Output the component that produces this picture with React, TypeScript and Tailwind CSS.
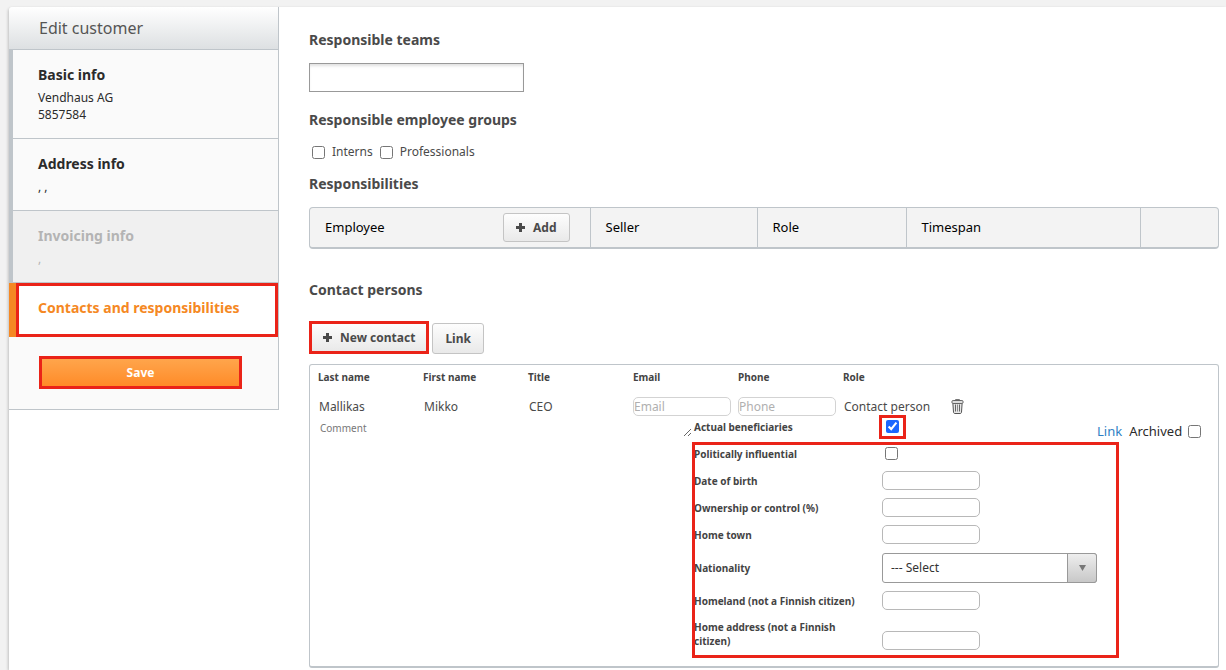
import React, { useState } from 'react';

const PlusIcon: React.FC = () => (
    <svg className="h-[9px] w-[9px]" viewBox="0 0 9 9" fill="currentColor" aria-hidden="true">
        <path d="M3 0h3v3h3v3H6v3H3V6H0V3h3z" />
    </svg>
);

const TrashIcon: React.FC = () => (
    <svg className="h-[15px] w-[13px]" viewBox="0 0 13 15" fill="none" aria-hidden="true">
        <path d="M4.500 1.500V.5h4v1" stroke="#777" />
        <path d="M1.900 4.500l.6 8.600c.1 1 .6 1.400 1.500 1.400h5c.9 0 1.400-.4 1.500-1.400l.6-8.600z" fill="#e6e6e6" stroke="#555" />
        <path d="M4.500 5.500v7M8.500 5.500v7" stroke="#666" />
        <path d="M6.500 5.500v7" stroke="#8a8a8a" />
        <rect x=".9" y="1.500" width="11.200" height="3" rx="1.200" fill="#dcdcdc" stroke="#666" />
    </svg>
);

interface Step {
    title: string;
    lines: string[];
    disabled?: boolean;
}

const STEPS: Step[] = [
    { title: 'Basic info', lines: ['Vendhaus AG', '5857584'] },
    { title: 'Address info', lines: [', ,'] },
    { title: 'Invoicing info', lines: [','], disabled: true },
];

const GROUPS = ['Interns', 'Professionals'];

const CONTACT_COLUMNS = ['Last name', 'First name', 'Title', 'Email', 'Phone', 'Role'];

const buttonStyle = 'flex items-center border bg-linear-to-b from-[#fdfdfd] to-[#e9e9e9] text-[12px] font-bold text-[#4a4a4a]';
const headingStyle = 'text-[14px] leading-5 font-bold text-[#4a4a4a]';
const inputStyle = 'h-[19px] w-[98px] rounded-[5px] border bg-white text-[12px]';

const Sidebar: React.FC = () => (
    <aside className="w-[270px] shrink-0 self-start overflow-hidden rounded-tl border-r border-b border-[#bfc5ca] bg-[#fafafa]">
        <h1 className="h-[43px] border-b border-[#bfc5ca] bg-linear-to-b from-white to-[#dde0e2] pl-[30px] text-[16px] leading-[42px] text-[#555]">
            Edit customer
        </h1>
        <nav>
            {STEPS.map((step) => (
                <a
                    key={step.title}
                    href="#"
                    aria-disabled={step.disabled}
                    className={`block border-b border-l-4 border-[#bfc5ca] pt-[15px] pb-[15px] pl-[25px] ${
                        step.disabled ? 'bg-[#f0f0f0] text-[#b4b4b4]' : 'text-[#2b2b2b]'
                    }`}
                >
                    <span className="block text-[14px] leading-5 font-bold">{step.title}</span>
                    <span className="mt-1 block text-[12px] leading-[17px]">
                        {step.lines.map((line) => (
                            <span key={line} className="block">{line}</span>
                        ))}
                    </span>
                </a>
            ))}
            <a href="#" aria-current="step" className="block border-l-[7px] border-[#f58823] bg-white">
                <span className="block border-3 border-[#ea2318] pt-[12px] pb-4 pl-[19px] text-[14px] leading-5 font-bold text-[#f58823]">
                    Contacts and responsibilities
                </span>
            </a>
        </nav>
        <div className="pt-[19px] pr-[36px] pb-5 pl-[30px]">
            <button
                type="button"
                className="block h-[33px] w-full border-3 border-[#ea2318] bg-linear-to-b from-[#ffa54b] to-[#ff8b26] text-[12px] font-bold text-white"
            >
                Save
            </button>
        </div>
    </aside>
);

const FieldRow: React.FC<{ id: string; label: string; className?: string; children: React.ReactNode }> = ({
    id,
    label,
    className = 'h-[27px] items-center',
    children,
}) => (
    <div className={`flex ${className}`}>
        <label htmlFor={id} className="w-[189px] shrink-0 pr-10 pl-px text-[10px] leading-[14px] font-bold whitespace-nowrap text-[#444]">
            {label}
        </label>
        {children}
    </div>
);

const ContactCard: React.FC = () => {
    const [beneficiary, setBeneficiary] = useState(true);

    return (
        <section className="mt-[10px] rounded-[3px] border border-b-2 border-[#bfc5ca] pb-3 pl-2">
            <table className="text-left text-[12px] text-[#4a4a4a]">
                <thead>
                    <tr className="h-[25px] text-[10px]">
                        {CONTACT_COLUMNS.map((column) => (
                            <th key={column} className="w-[105px] min-w-[105px] font-bold text-[#444]">{column}</th>
                        ))}
                        <td />
                    </tr>
                </thead>
                <tbody>
                    <tr className="h-[26px] align-bottom leading-[19px]">
                        <td className="pl-px">Mallikas</td>
                        <td className="pl-px">Mikko</td>
                        <td className="pl-px">CEO</td>
                        <td>
                            <input type="email" aria-label="Email" placeholder="Email" className={`${inputStyle} block border-[#d3d3d3] placeholder:text-[#b0b0b0]`} />
                        </td>
                        <td>
                            <input type="tel" aria-label="Phone" placeholder="Phone" className={`${inputStyle} block border-[#d3d3d3] placeholder:text-[#b0b0b0]`} />
                        </td>
                        <td className="pl-px whitespace-nowrap">Contact person</td>
                        <td className="pb-0.5 pl-[3px]">
                            <button type="button" aria-label="Delete contact" className="block">
                                <TrashIcon />
                            </button>
                        </td>
                    </tr>
                </tbody>
            </table>

            <div className="flex items-start">
                <textarea
                    aria-label="Comment"
                    placeholder="Comment"
                    rows={1}
                    className="h-[21px] w-[374px] shrink-0 resize overflow-hidden pt-[5px] pl-0.5 text-[10px] leading-[14px] placeholder:text-[#777]"
                />
                <div className="-mt-[3px] ml-px w-[404px] shrink-0">
                    <FieldRow id="beneficiary" label="Actual beneficiaries">
                        <span className="-ml-[3px] flex h-6 w-[27px] items-center justify-center border-3 border-[#ea2318]">
                            <input
                                id="beneficiary"
                                type="checkbox"
                                checked={beneficiary}
                                onChange={(e) => setBeneficiary(e.target.checked)}
                                className="h-[13px] w-[13px] accent-[#1b66ff]"
                            />
                        </span>
                    </FieldRow>
                    <div className="relative">
                        <FieldRow id="political" label="Politically influential">
                            <input id="political" type="checkbox" className="ml-[3px] h-[13px] w-[13px]" />
                        </FieldRow>
                        <FieldRow id="birth" label="Date of birth">
                            <input id="birth" type="text" className={`${inputStyle} border-[#b8b8b8]`} />
                        </FieldRow>
                        <FieldRow id="ownership" label="Ownership or control (%)">
                            <input id="ownership" type="text" className={`${inputStyle} border-[#b8b8b8]`} />
                        </FieldRow>
                        <FieldRow id="town" label="Home town">
                            <input id="town" type="text" className={`${inputStyle} border-[#b8b8b8]`} />
                        </FieldRow>
                        <FieldRow id="nationality" label="Nationality" className="h-[39px] items-center">
                            <div className="relative w-[215px]">
                                <select
                                    id="nationality"
                                    className="block h-[30px] w-full appearance-none rounded-[3px] border border-[#999] bg-white pl-2 text-[12px] text-[#333]"
                                >
                                    <option>--- Select</option>
                                </select>
                                <span className="pointer-events-none absolute inset-y-0 right-0 flex w-[30px] items-center justify-center rounded-r-[3px] border border-[#999] bg-linear-to-b from-[#eee] to-[#c8c8c8]">
                                    <svg className="h-[6px] w-[7px]" viewBox="0 0 7 6" fill="#777" aria-hidden="true">
                                        <path d="M0 0h7L3.500 6z" />
                                    </svg>
                                </span>
                            </div>
                        </FieldRow>
                        <FieldRow id="homeland" label="Homeland (not a Finnish citizen)">
                            <input id="homeland" type="text" className={`${inputStyle} border-[#b8b8b8]`} />
                        </FieldRow>
                        <div className="flex h-10 items-center">
                            <label htmlFor="address" className="w-[189px] shrink-0 pr-10 pl-px text-[10px] leading-[14px] font-bold text-[#444]">
                                Home address (not a Finnish citizen)
                            </label>
                            <input id="address" type="text" className={`${inputStyle} mb-1 self-end border-[#b8b8b8]`} />
                        </div>
                        <div className="pointer-events-none absolute top-0.5 -right-[22px] -bottom-1 -left-px border-3 border-[#ea2318]" />
                    </div>
                </div>
                <div className="flex items-center pt-[5px] text-[13px] leading-5 text-[#2b2b2b]">
                    <a href="#" className="text-[#2f7fc4]">Link</a>
                    <label htmlFor="archived" className="ml-[7px]">Archived</label>
                    <input id="archived" type="checkbox" className="ml-[6px] h-[13px] w-[13px]" />
                </div>
            </div>
        </section>
    );
};

const App: React.FC = () => {
    return (
        <div className="flex min-h-screen flex-col bg-[#f2f2f2] pt-[7px] pl-[9px] font-['Noto_Sans',sans-serif]">
            <div className="flex flex-1 rounded-tl bg-white shadow-[-1px_1px_3px_rgba(0,0,0,0.2)]">
                <Sidebar />
                <main className="min-w-0 flex-1 pt-[23px] pr-[7px] pl-[30px]">
                    <h2 className={headingStyle}>
                        <label htmlFor="teams">Responsible teams</label>
                    </h2>
                    <input
                        id="teams"
                        type="text"
                        className="mt-[13px] block h-[29px] w-[215px] border border-[#999] px-2 text-[12px] shadow-[inset_0_3px_3px_-1px_rgba(0,0,0,0.12)]"
                    />

                    <h2 className={`${headingStyle} mt-[18px]`}>Responsible employee groups</h2>
                    <div className="mt-3 flex h-5 items-center gap-[7px] pl-[3px]">
                        {GROUPS.map((group) => (
                            <label key={group} className="flex items-center gap-[7px] text-[12px] leading-5 text-[#4a4a4a]">
                                <input type="checkbox" className="h-[13px] w-[13px]" />
                                {group}
                            </label>
                        ))}
                    </div>

                    <h2 className={`${headingStyle} mt-3`}>Responsibilities</h2>
                    <div className="mt-[13px] overflow-hidden rounded border border-b-2 border-[#bfc5ca] bg-[#f3f3f3]">
                        <table className="w-full table-fixed text-left text-[13px] text-black">
                            <thead>
                                <tr className="h-[39px] divide-x divide-[#bfc5ca]">
                                    <th className="w-[280px] pr-5 pl-[15px] font-normal">
                                        <div className="flex items-center justify-between">
                                            Employee
                                            <button type="button" className={`${buttonStyle} h-[29px] gap-2 rounded-[3px] border-[#c4c4c4] px-3`}>
                                                <PlusIcon />
                                                Add
                                            </button>
                                        </div>
                                    </th>
                                    <th className="w-[167px] pl-[15px] font-normal">Seller</th>
                                    <th className="w-[149px] pl-[15px] font-normal">Role</th>
                                    <th className="w-[234px] pl-[15px] font-normal">Timespan</th>
                                    <td />
                                </tr>
                            </thead>
                        </table>
                    </div>

                    <h2 className={`${headingStyle} mt-[31px]`}>Contact persons</h2>
                    <div className="mt-[21px] flex items-end gap-[3px]">
                        <button type="button" className={`${buttonStyle} h-[33px] gap-2 border-3 border-[#ea2318] px-[11px]`}>
                            <PlusIcon />
                            New contact
                        </button>
                        <button type="button" className={`${buttonStyle} h-[31px] rounded-[3px] border-[#c4c4c4] px-3`}>
                            Link
                        </button>
                    </div>

                    <ContactCard />
                </main>
            </div>
        </div>
    );
};

export default App;
